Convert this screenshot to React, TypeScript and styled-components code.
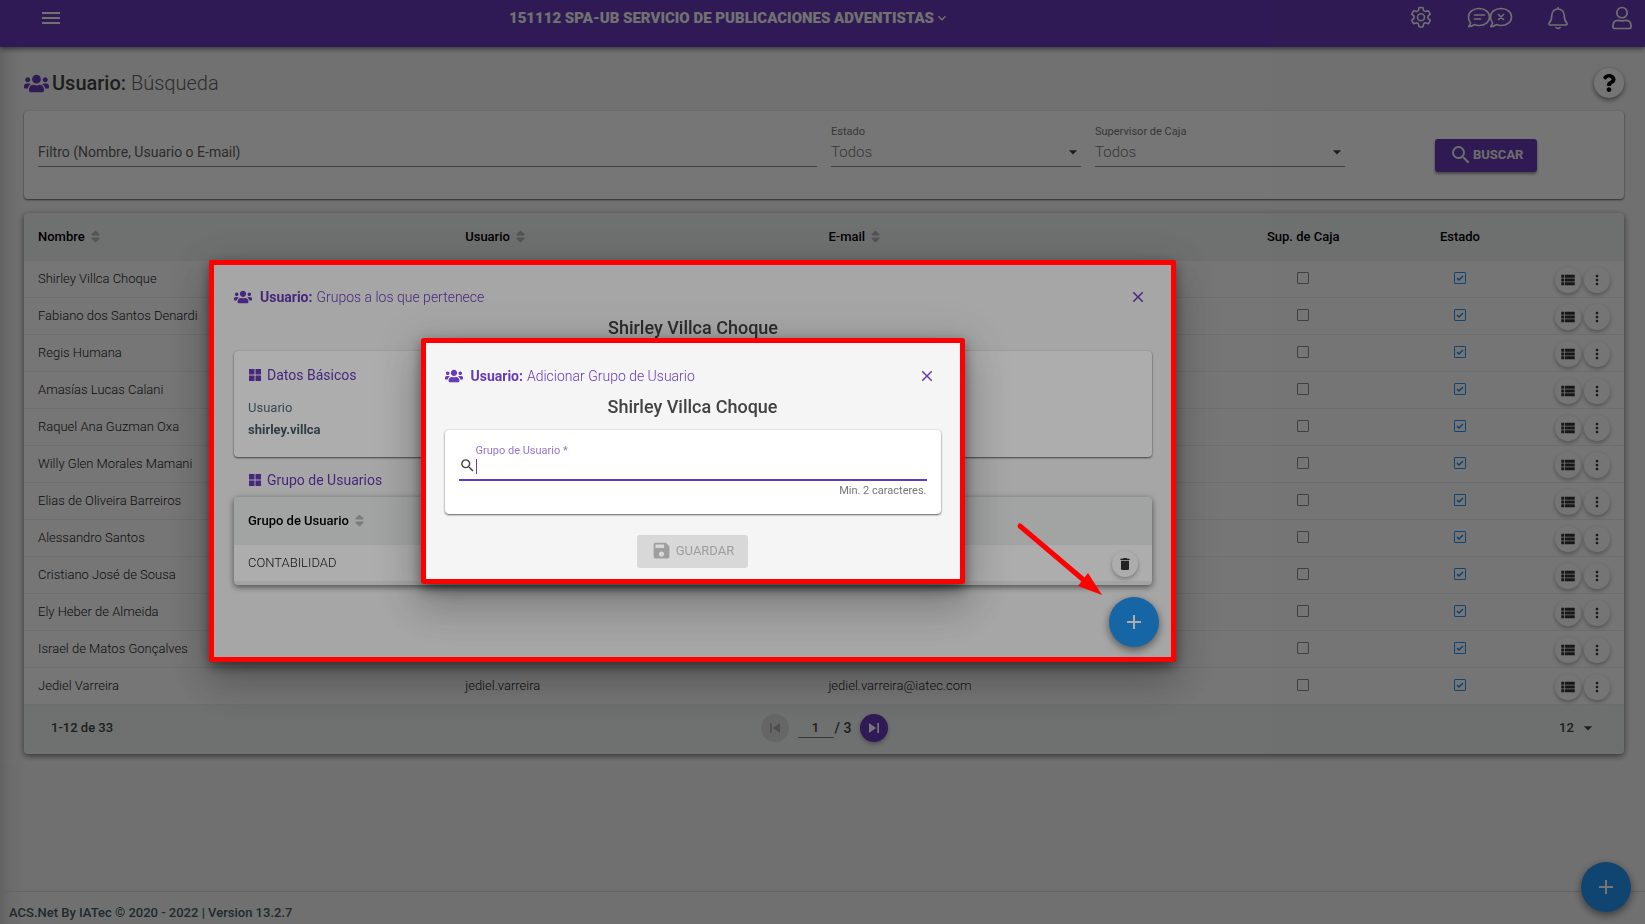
import React from 'react';
import styled, { createGlobalStyle, css } from 'styled-components';
import { FaUsers, FaQuestion, FaSort } from 'react-icons/fa';
import {
  MdAdd,
  MdArrowDropDown,
  MdClose,
  MdDelete,
  MdMenu,
  MdMoreVert,
  MdSave,
  MdSearch,
  MdSkipNext,
  MdSkipPrevious,
  MdViewList,
  MdKeyboardArrowDown,
} from 'react-icons/md';

const purple = '#673ab7';
const lilac = '#9575cd';
const line = '#eeeef6';

const GlobalStyle = createGlobalStyle`
  *, *::before, *::after { box-sizing: border-box; }
  body { margin: 0; font-family: Roboto, "Liberation Sans", sans-serif; font-size: 13px; color: #424242; background: #f5f5f5; }
  button, input, select { font: inherit; color: inherit; }
  button { padding: 0; border: 0; background: none; display: inline-flex; align-items: center; justify-content: center; }
  svg { display: block; flex: none; }
  h1, h2, h3, p { margin: 0; }
`;

const Page = styled.div`
  min-height: 100vh;
  display: flex;
  flex-direction: column;
  overflow: hidden;
  background: linear-gradient(to right, #d4d4d4 0, #eaeaea 10px, #f5f5f5 26px);
`;

const TopBar = styled.header`
  height: 47px;
  padding: 0 12px 12px 39px;
  display: grid;
  grid-template-columns: 1fr auto 1fr;
  align-items: center;
  color: #f5f5f5;
  background: ${purple};
  box-shadow: 0 2px 5px rgba(0, 0, 0, 0.5);
`;

const MenuButton = styled.button`
  justify-self: start;
`;

const UnitButton = styled.button`
  margin-right: 213px;
  font-size: 15px;
  font-weight: 900;
  white-space: nowrap;
`;

const TopIcons = styled.nav`
  justify-self: end;
  display: flex;
  align-items: center;
  gap: 34px;
  button:last-child { margin-left: 8px; }
`;

const Main = styled.main`
  flex: 1;
  padding: 21px 21px 0 24px;
`;

const PageHead = styled.div`
  height: 30px;
  margin-bottom: 13px;
  display: flex;
  align-items: center;
  justify-content: space-between;
`;

const PageTitle = styled.h1`
  display: flex;
  align-items: center;
  gap: 3px;
  font-size: 20px;
  font-weight: 300;
  color: #616161;
  svg { color: ${purple}; }
  strong { font-weight: 500; color: #424242; }
`;

const RoundButton = styled.button<{ $size: number; $tone?: 'purple' | 'off' | 'blue' }>`
  width: ${(p) => p.$size}px;
  height: ${(p) => p.$size}px;
  border-radius: 50%;
  color: #333;
  background: #fff;
  box-shadow: 0 2px 4px rgba(0, 0, 0, 0.3);
  ${(p) => p.$tone === 'purple' && css`color: #fff; background: ${purple};`}
  ${(p) => p.$tone === 'blue' && css`color: #fff; background: #2196f3; box-shadow: 0 3px 8px rgba(0, 0, 0, 0.5);`}
  ${(p) => p.$tone === 'off' && css`color: #a8a8a8; background: #dadcdb; box-shadow: none;`}
`;

const HelpButton = styled(RoundButton)`
  color: #000;
  box-shadow: 0 2px 5px rgba(0, 0, 0, 0.5);
`;

const Card = styled.section`
  border-radius: 4px;
  background: #fff;
  box-shadow: 0 1px 2px rgba(0, 0, 0, 0.6), 0 0 2px rgba(0, 0, 0, 0.12);
`;

const FilterCard = styled(Card)`
  height: 88px;
  margin-bottom: 14px;
  padding: 14px;
  display: flex;
  align-items: flex-start;
  gap: 14px;
`;

const Field = styled.label<{ $wide?: boolean }>`
  flex: ${(p) => (p.$wide ? '1 1 0' : '0 0 250px')};
  height: 42px;
  position: relative;
  display: flex;
  flex-direction: column;
  justify-content: space-between;
  border-bottom: 1px solid #8a8a8a;
  font-size: 11px;
  color: #757575;
  svg { position: absolute; right: -2px; bottom: 4px; color: #424242; }
`;

const FilterInput = styled.input`
  width: 100%;
  height: 28px;
  margin-top: auto;
  padding: 0;
  border: 0;
  outline: 0;
  background: none;
  font-size: 14px;
  &::placeholder { color: #616161; opacity: 1; }
`;

const FilterSelect = styled.select`
  width: 100%;
  height: 28px;
  padding: 0;
  border: 0;
  appearance: none;
  background: none;
  font-size: 15px;
  font-weight: 300;
`;

const SearchArea = styled.div`
  width: 251px;
  padding: 14px 0 0 76px;
`;

const ActionButton = styled.button<{ $disabledLook?: boolean }>`
  height: 33px;
  padding: 0 14px 2px;
  border-radius: 3px;
  font-size: 13px;
  font-weight: 700;
  color: #eee;
  background: ${purple};
  box-shadow: 0 2px 3px rgba(0, 0, 0, 0.4);
  ${(p) => p.$disabledLook && css`
    gap: 4px;
    font-weight: 400;
    color: #9e9e9e;
    background: #d8d8d8;
    box-shadow: none;
  `}
`;

const TableCard = styled(Card)`
  overflow: hidden;
  background: #eff2f2;
  box-shadow: 0 2px 6px rgba(0, 0, 0, 0.55);
`;

const Table = styled.table`
  width: 100%;
  border-collapse: collapse;
  table-layout: fixed;
  th {
    height: 47px;
    padding: 0 0 0 14px;
    text-align: left;
    font-weight: 500;
    color: #000;
  }
  td {
    height: 37px;
    padding: 0 0 0 14px;
    border-top: 1px solid ${line};
    background: #fff;
    font-weight: 300;
    color: #212121;
  }
`;

const CenterTh = styled.th`
  && { padding: 0; text-align: center; }
`;

const CenterTd = styled.td`
  && { padding: 0 0 2px; }
`;

const ActionTd = styled.td`
  && { padding: 2px 14px 0 0; }
`;

const Actions = styled.div`
  display: flex;
  justify-content: flex-end;
  gap: 3px;
`;

const Sortable = styled.span`
  display: inline-flex;
  align-items: center;
  gap: 3px;
  svg { color: #b5b5b5; }
`;

const Check = styled.input`
  width: 12px;
  height: 12px;
  margin: 0 auto;
  display: block;
  appearance: none;
  border: 1px solid #8b8b8b;
  border-radius: 1px;
  &:checked {
    border-color: #2196f3;
    background: url("data:image/svg+xml,%3Csvg xmlns='http://www.w3.org/2000/svg' viewBox='0 0 10 10'%3E%3Cpath d='M2 5l2 2 4-4' fill='none' stroke='%231e88e5' stroke-width='1.4'/%3E%3C/svg%3E");
  }
`;

const Pager = styled.div`
  height: 50px;
  padding: 0 26px 4px 27px;
  display: grid;
  grid-template-columns: 1fr auto 1fr;
  align-items: center;
  border-top: 1px solid ${line};
  font-weight: 500;
`;

const PagerNav = styled.div`
  display: flex;
  align-items: center;
  gap: 9px;
`;

const PageOf = styled.label`
  display: flex;
  align-items: center;
  gap: 1px;
  font-size: 14px;
  white-space: nowrap;
`;

const PageInput = styled.input`
  width: 36px;
  height: 21px;
  padding: 0;
  border: 0;
  border-bottom: 1px solid #757575;
  background: none;
  text-align: center;
  font-size: 13px;
`;

const SizePick = styled.label`
  justify-self: end;
  display: flex;
  align-items: center;
  gap: 1px;
`;

const SizeSelect = styled.select`
  width: 18px;
  padding: 0;
  border: 0;
  appearance: none;
  background: none;
  font-weight: 500;
`;

const Footer = styled.footer`
  height: 33px;
  padding: 8px 9px 0;
  display: flex;
  align-items: center;
  border-top: 1px solid #d8d8d8;
  font-weight: 500;
  color: #455a64;
`;

const PageFab = styled(RoundButton)`
  position: fixed;
  right: 14px;
  bottom: 12px;
`;

const Layer = styled.div`
  position: fixed;
  inset: 0;
  padding: 0 260px 2px 0;
  display: flex;
  align-items: center;
  justify-content: center;
`;

const Backdrop = styled(Layer)`
  background: rgba(0, 0, 0, 0.32);
`;

const HighlightLayer = styled(Layer)`
  pointer-events: none;
`;

const Frame = styled.div<{ $width: number }>`
  position: relative;
  width: ${(p) => p.$width}px;
  border: 5px solid #f00;
  border-radius: 3px;
`;

const Dialog = styled(Frame)`
  background: #f5f5f5;
  box-shadow: 0 11px 15px -7px rgba(0, 0, 0, 0.2), 0 24px 38px 3px rgba(0, 0, 0, 0.14), 0 9px 46px 8px rgba(0, 0, 0, 0.12),
    0 4px 12px rgba(0, 0, 0, 0.4);
`;

const GroupsDialog = styled(Dialog)`
  height: 402px;
  padding: 22px 19px 0 20px;
`;

const GroupsFrame = styled(Frame)`
  height: 402px;
`;

const AddDialog = styled(Dialog)`
  padding: 23px 19px 11px;
`;

const DialogHead = styled.div`
  height: 20px;
  padding-right: 5px;
  display: flex;
  align-items: center;
  justify-content: space-between;
  color: ${purple};
`;

const DialogTitle = styled.h2`
  display: flex;
  align-items: center;
  font-size: 14px;
  font-weight: 300;
  svg { margin-right: 8px; }
  strong { margin-right: 4px; font-weight: 700; }
`;

const PersonName = styled.h3`
  height: 22px;
  margin: 10px 0 12px;
  line-height: 22px;
  text-align: center;
  font-size: 18px;
  font-weight: 500;
`;

const SectionTitle = styled.h3`
  display: flex;
  align-items: center;
  gap: 5px;
  height: 18px;
  font-size: 14px;
  font-weight: 400;
  color: ${purple};
`;

const BasicCard = styled(Card)`
  height: 106px;
  margin-bottom: 14px;
  padding: 15px 14px;
`;

const Fact = styled.p`
  margin-top: 13px;
  line-height: 22px;
  color: #546e7a;
  strong { display: block; font-weight: 700; color: #455a64; }
`;

const GroupHeading = styled.div`
  padding: 0 14px;
  margin-bottom: 8px;
`;

const GroupTableCard = styled(TableCard)`
  padding-bottom: 4px;
`;

const DialogFab = styled(RoundButton)`
  position: absolute;
  right: 12px;
  bottom: 10px;
`;

const Arrow = styled.svg`
  position: absolute;
  right: 67px;
  top: 256px;
`;

const GroupCard = styled(Card)`
  height: 84px;
  padding: 12px 14px;
`;

const GroupField = styled.label`
  height: 39px;
  display: flex;
  align-items: flex-end;
  padding-bottom: 5px;
  border-bottom: 2px solid ${purple};
  svg { stroke: currentColor; }
`;

const GroupInputBox = styled.span`
  position: relative;
  flex: 1;
  display: flex;
  flex-direction: column;
  font-size: 11px;
  color: ${lilac};
  &::after {
    content: '';
    position: absolute;
    left: 0;
    bottom: 0;
    width: 1px;
    height: 15px;
    background: ${purple};
  }
`;

const GroupInput = styled.input`
  height: 17px;
  padding: 0;
  border: 0;
  outline: 0;
  background: none;
  caret-color: transparent;
`;

const Hint = styled.p`
  margin-top: 3px;
  text-align: right;
  font-size: 11px;
  color: #757575;
`;

const DialogFooter = styled.div`
  margin-top: 21px;
  display: flex;
  justify-content: center;
`;

const people = [
  'Shirley Villca Choque',
  'Fabiano dos Santos Denardi',
  'Regis Humana',
  'Amasías Lucas Calani',
  'Raquel Ana Guzman Oxa',
  'Willy Glen Morales Mamani',
  'Elias de Oliveira Barreiros',
  'Alessandro Santos',
  'Cristiano José de Sousa',
  'Ely Heber de Almeida',
  'Israel de Matos Gonçalves',
  'Jediel Varreira',
];

const GearIcon = () => (
  <svg width="24" height="24" viewBox="0 0 24 24" fill="none" stroke="currentColor" strokeWidth="1.6" strokeLinejoin="round">
    <path d="M10 1.700q2-.5 4 0l.6 2.900 1.800 1 2.800-.9q1.400 1.500 2 3.500l-2.200 1.900v2.200l2.200 1.900q-.6 2-2 3.500l-2.800-.9-1.800 1-.6 2.900q-2 .5-4 0l-.6-2.900-1.800-1-2.800.9q-1.400-1.500-2-3.500l2.200-1.900v-2.200L2.800 8.200q.6-2 2-3.500l2.800.9 1.800-1z" />
    <circle cx="12" cy="11.200" r="3.500" />
  </svg>
);

const ChatIcon = () => (
  <svg width="46" height="22" viewBox="0 0 46 22" fill="none" stroke="currentColor" strokeWidth="1.600" strokeLinecap="round" strokeLinejoin="round">
    <path d="M12 1.500c6 0 10.500 3.700 10.500 8.500s-4.500 8.500-10.500 8.500c-1.700 0-3.300-.3-4.700-.9-1.500 1.200-3.400 2-5.600 2 1-1.200 1.700-2.400 1.900-3.700C2.300 14.400 1.500 12.300 1.500 10 1.500 5.200 6 1.500 12 1.500z" />
    <path d="M7.500 8h10M7.500 12h6" />
    <path d="M34 1.500c6 0 10.500 3.700 10.500 8.500s-4.500 8.500-10.500 8.500c-1.700 0-3.300-.3-4.700-.9-1.500 1.200-3.400 2-5.600 2 1-1.200 1.700-2.400 1.900-3.700-1.300-1.500-2.100-3.600-2.100-5.900 0-4.800 4.500-8.500 10.500-8.500z" />
    <path d="M31.500 7.500l5 5m0-5l-5 5" />
  </svg>
);

const BellIcon = () => (
  <svg width="22" height="24" viewBox="0 0 22 24" fill="none" stroke="currentColor" strokeWidth="1.6" strokeLinecap="round" strokeLinejoin="round">
    <path d="M11 1.500v1.500M11 3c-3.600 0-6.200 2.700-6.200 6.200 0 5-1.200 6.300-2.500 7.700-.9 1-.4 2.100.9 2.100h15.600c1.300 0 1.800-1.100.9-2.100-1.300-1.400-2.500-2.700-2.500-7.700C17.200 5.700 14.600 3 11 3z" />
    <path d="M9 21.500c.5 1.200 3.500 1.200 4 0" />
  </svg>
);

const UserIcon = () => (
  <svg width="22" height="24" viewBox="0 0 22 24" fill="none" stroke="currentColor" strokeWidth="1.7" strokeLinejoin="round">
    <circle cx="11" cy="6.700" r="5.200" />
    <path d="M1.900 20.500c0-3.800 2-6.200 5-6.200 1.500 0 2.300.6 4.100.6s2.600-.6 4.100-.6c3 0 5 2.400 5 6.200 0 1.400-.8 2-2 2H3.900c-1.200 0-2-.6-2-2z" />
  </svg>
);

const TilesIcon = () => (
  <svg width="14" height="14" viewBox="0 0 14 14" fill="currentColor">
    <path d="M1 1h5.500v5.500H1zM7.500 1H13v5.500H7.500zM1 7.500h5.500V13H1zM7.500 7.500H13V13H7.500z" />
  </svg>
);

const SortHead = ({ children }: { children: React.ReactNode }) => (
  <Sortable>
    {children}
    <FaSort size={15} />
  </Sortable>
);

const UsersTable = () => (
  <Table>
    <colgroup>
      <col style={{ width: '26.7%' }} />
      <col style={{ width: '22.7%' }} />
      <col style={{ width: '25.6%' }} />
      <col style={{ width: '9.9%' }} />
      <col style={{ width: '9.7%' }} />
      <col />
    </colgroup>
    <thead>
      <tr>
        <th><SortHead>Nombre</SortHead></th>
        <th><SortHead>Usuario</SortHead></th>
        <th><SortHead>E-mail</SortHead></th>
        <CenterTh>Sup. de Caja</CenterTh>
        <CenterTh>Estado</CenterTh>
        <th aria-label="Acciones" />
      </tr>
    </thead>
    <tbody>
      {people.map((name, i) => (
        <tr key={name}>
          <td>{name}</td>
          <td>{i === people.length - 1 && 'jediel.varreira'}</td>
          <td>{i === people.length - 1 && 'jediel.varreira@iatec.com'}</td>
          <CenterTd><Check type="checkbox" aria-label="Supervisor de Caja" /></CenterTd>
          <CenterTd><Check type="checkbox" aria-label="Estado" defaultChecked /></CenterTd>
          <ActionTd>
            <Actions>
              <RoundButton $size={26} aria-label="Grupos"><MdViewList size={18} /></RoundButton>
              <RoundButton $size={26} aria-label="Más"><MdMoreVert size={16} /></RoundButton>
            </Actions>
          </ActionTd>
        </tr>
      ))}
    </tbody>
  </Table>
);

export default function App() {
  return (
    <>
      <GlobalStyle />
      <Page>
        <TopBar>
          <MenuButton aria-label="Menú"><MdMenu size={24} /></MenuButton>
          <UnitButton>
            151112 SPA-UB SERVICIO DE PUBLICACIONES ADVENTISTAS <MdKeyboardArrowDown size={16} />
          </UnitButton>
          <TopIcons>
            <button aria-label="Configuración"><GearIcon /></button>
            <button aria-label="Mensajes"><ChatIcon /></button>
            <button aria-label="Notificaciones"><BellIcon /></button>
            <button aria-label="Perfil"><UserIcon /></button>
          </TopIcons>
        </TopBar>
        <Main>
          <PageHead>
            <PageTitle>
              <FaUsers size={25} />
              <span><strong>Usuario:</strong> Búsqueda</span>
            </PageTitle>
            <HelpButton $size={30} aria-label="Ayuda"><FaQuestion size={18} /></HelpButton>
          </PageHead>
          <FilterCard>
            <Field $wide>
              <FilterInput aria-label="Filtro" placeholder="Filtro (Nombre, Usuario o E-mail)" />
            </Field>
            <Field>
              Estado
              <FilterSelect><option>Todos</option></FilterSelect>
              <MdArrowDropDown size={20} />
            </Field>
            <Field>
              Supervisor de Caja
              <FilterSelect><option>Todos</option></FilterSelect>
              <MdArrowDropDown size={20} />
            </Field>
            <SearchArea>
              <ActionButton><MdSearch size={24} />BUSCAR</ActionButton>
            </SearchArea>
          </FilterCard>
          <TableCard>
            <UsersTable />
            <Pager>
              <span>1-12 de 33</span>
              <PagerNav>
                <RoundButton $size={28} $tone="off" aria-label="Primera"><MdSkipPrevious size={20} /></RoundButton>
                <PageOf><PageInput defaultValue="1" aria-label="Página" /> / 3</PageOf>
                <RoundButton $size={28} $tone="purple" aria-label="Última"><MdSkipNext size={20} /></RoundButton>
              </PagerNav>
              <SizePick>
                <SizeSelect aria-label="Filas"><option>12</option></SizeSelect>
                <MdArrowDropDown size={20} />
              </SizePick>
            </Pager>
          </TableCard>
        </Main>
        <Footer>ACS.Net By IATec © 2020 - 2022 | Version 13.2.7</Footer>
        <PageFab $size={50} $tone="blue" aria-label="Agregar"><MdAdd size={24} /></PageFab>
      </Page>

      <Backdrop>
        <GroupsDialog $width={967} role="dialog" aria-label="Grupos a los que pertenece">
          <DialogHead>
            <DialogTitle><FaUsers size={18} /><strong>Usuario:</strong>Grupos a los que pertenece</DialogTitle>
            <button aria-label="Cerrar"><MdClose size={18} /></button>
          </DialogHead>
          <PersonName>Shirley Villca Choque</PersonName>
          <BasicCard>
            <SectionTitle><TilesIcon />Datos Básicos</SectionTitle>
            <Fact>Usuario<strong>shirley.villca</strong></Fact>
          </BasicCard>
          <GroupHeading>
            <SectionTitle><TilesIcon />Grupo de Usuarios</SectionTitle>
          </GroupHeading>
          <GroupTableCard>
            <Table>
              <thead>
                <tr><th><SortHead>Grupo de Usuario</SortHead></th><th aria-label="Acciones" /></tr>
              </thead>
              <tbody>
                <tr>
                  <td>CONTABILIDAD</td>
                  <ActionTd>
                    <Actions>
                      <RoundButton $size={26} aria-label="Eliminar"><MdDelete size={16} /></RoundButton>
                    </Actions>
                  </ActionTd>
                </tr>
              </tbody>
            </Table>
          </GroupTableCard>
          <DialogFab $size={50} $tone="blue" aria-label="Agregar grupo"><MdAdd size={24} /></DialogFab>
        </GroupsDialog>
      </Backdrop>

      <Backdrop>
        <AddDialog $width={544} role="dialog" aria-label="Adicionar Grupo de Usuario">
          <DialogHead>
            <DialogTitle><FaUsers size={18} /><strong>Usuario:</strong>Adicionar Grupo de Usuario</DialogTitle>
            <button aria-label="Cerrar"><MdClose size={18} /></button>
          </DialogHead>
          <PersonName>Shirley Villca Choque</PersonName>
          <GroupCard>
            <GroupField>
              <MdSearch size={17} />
              <GroupInputBox>
                Grupo de Usuario *
                <GroupInput type="text" />
              </GroupInputBox>
            </GroupField>
            <Hint>Min. 2 caracteres.</Hint>
          </GroupCard>
          <DialogFooter>
            <ActionButton $disabledLook disabled><MdSave size={21} />GUARDAR</ActionButton>
          </DialogFooter>
        </AddDialog>
      </Backdrop>

      <HighlightLayer>
        <GroupsFrame $width={967}>
          <Arrow width="88" height="76" viewBox="0 0 88 76" fill="#f00">
            <path d="M4 5l66 56" stroke="#f00" strokeWidth="5" strokeLinecap="round" />
            <path d="M86 74L62 65l10-13z" />
          </Arrow>
        </GroupsFrame>
      </HighlightLayer>
    </>
  );
}
